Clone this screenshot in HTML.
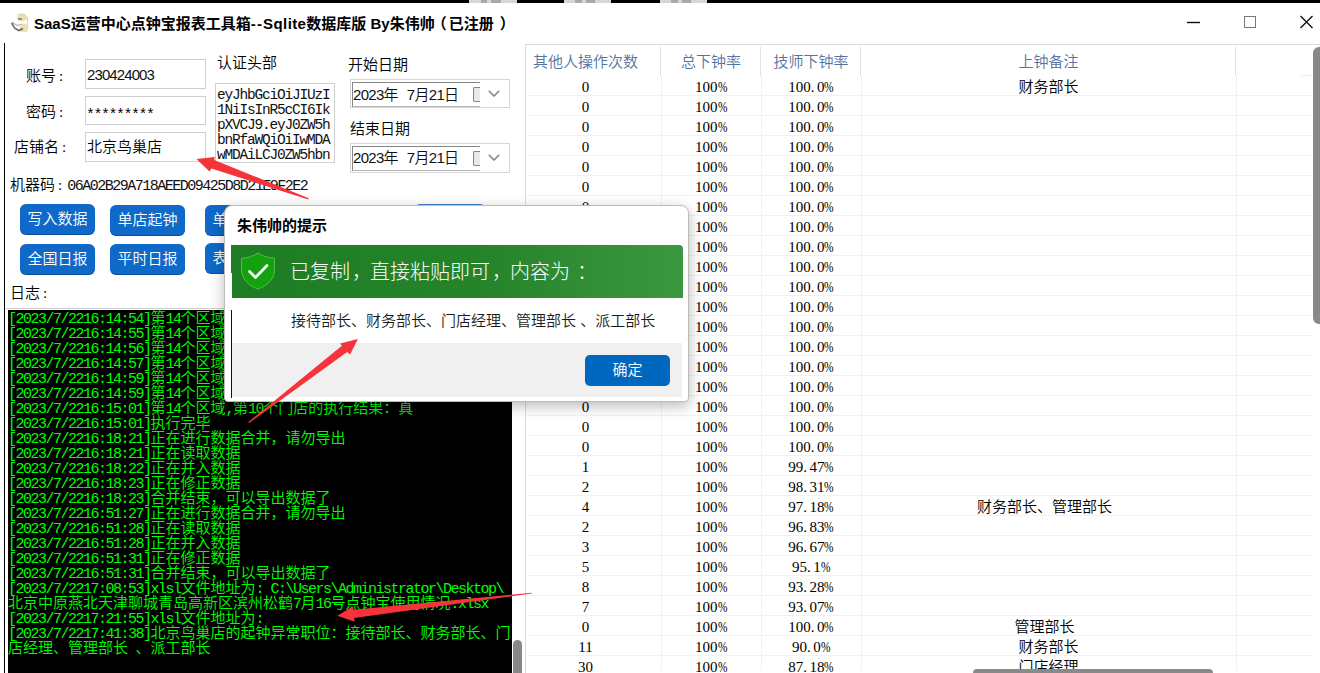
<!DOCTYPE html>
<html lang="zh-CN">
<head>
<meta charset="utf-8">
<title>SaaS运营中心点钟宝报表工具箱</title>
<style>
*{box-sizing:border-box;margin:0;padding:0}
html,body{width:1320px;height:673px;overflow:hidden;background:#fff}
body{position:relative;font-family:"Liberation Serif","Noto Sans CJK SC",serif;font-weight:350;font-size:15px;color:#000}
.abs{position:absolute}
#topstrip{position:absolute;left:0;top:0;width:1320px;height:3px;background:#000}
#topstrip i{position:absolute;top:0;height:2.500px;background:linear-gradient(90deg,#d6d6d6 0 24%,#a9a9a9 24% 38%,#d6d6d6 38% 46%,#a9a9a9 46% 66%,#d6d6d6 66%)}
#title{position:absolute;left:34px;top:13px;height:22px;line-height:22px;font-family:"Liberation Sans","Noto Sans CJK SC",sans-serif;font-weight:bold;font-size:15px;color:#000;white-space:nowrap}
#leftline{position:absolute;left:4px;top:43px;width:1px;height:630px;background:#000}
.lbl{position:absolute;white-space:nowrap;height:18px;line-height:18px;font-size:15px}
.inp{position:absolute;border:1px solid #cfcfcf;background:#fff;white-space:nowrap;font-size:15px;padding-left:1px}
.hw{font-family:"Liberation Mono",monospace;letter-spacing:-1.5px}
.btn{position:absolute;width:75px;height:30px;line-height:29px;border-radius:6px;background:#0f69c8;box-shadow:0 1px 0 #0a4f9c;color:#fff;text-align:center;font-family:"Liberation Sans","Noto Sans CJK SC",sans-serif;font-size:15px;white-space:nowrap;overflow:hidden}
#log{position:absolute;left:8px;top:310px;width:504px;height:363px;padding-top:2px;background:#000;color:#00ff00;overflow:hidden;font-family:"Liberation Mono","Noto Sans CJK SC",monospace;font-size:15px;font-weight:350}
#log .ll{height:15px;line-height:15px;white-space:nowrap}
#log .a{letter-spacing:-1.5px;white-space:pre}
/* table */
#tbl{position:absolute;left:525px;top:44px;width:795px;height:629px}
#tbl:before{content:"";position:absolute;left:0;top:0;width:1.300px;height:629px;background:#dadada}
#tbl:after{content:"";position:absolute;left:0;top:0;width:795px;height:1.300px;background:#dcdcdc}
.th{position:absolute;top:47px;height:30px;line-height:30px;text-align:center;color:#54739f;font-weight:350;font-family:"Liberation Sans","Noto Sans CJK SC",sans-serif;font-size:15px;white-space:nowrap}
.vl{position:absolute;width:1px;background:#f1f1f1}
.vh{position:absolute;width:1px;background:#e2e2e2;top:47px;height:29px}
.tr{position:absolute;left:527px;width:785px;height:20px;border-bottom:1px solid #f1f1f1;font-size:15px;line-height:23px;white-space:nowrap}
.c{position:absolute;top:0;height:20px;text-align:center}
.c1{left:-9px;width:135px}.c2{left:134px;width:100px}.c3{left:234px;width:100px}.c4{left:334px;width:375px}
.dp{position:absolute;left:350px;width:160px;height:29px;border:1px solid #d6d6d6;background:#fff}
.dpi{position:absolute;left:1px;top:2px;width:128px;height:25px;border:1px solid #868686;border-right:none;border-bottom-color:#b4b4b4;line-height:21px;padding-left:0;font-size:15px;white-space:pre;font-family:"Liberation Sans","Noto Sans CJK SC",sans-serif;letter-spacing:-.7px;word-spacing:5.5px;color:#111}
.cal{position:absolute;left:122px;top:7px;width:7px;height:15px;border:1.500px solid #8d8282;border-right:none;border-radius:2px 0 0 2px;background:#e8e8f0}
.chev{position:absolute;left:137px;top:10px}
#dlg{position:absolute;left:224px;top:205px;width:465px;height:197px;background:#fff;border:1px solid #bdbdbd;border-radius:8px 8px 4px 4px;box-shadow:0 4px 14px rgba(0,0,0,.28);font-family:"Liberation Sans","Noto Sans CJK SC",sans-serif;overflow:hidden}
#dlgt{position:absolute;left:12px;top:9px;height:22px;line-height:22px;font-weight:bold;font-size:15px}
#ban{position:absolute;left:7px;top:39px;width:451px;height:53px;background:linear-gradient(90deg,#1e7d24 0%,#25832a 55%,#3c9741 100%);border-radius:0 4px 0 0}
#bant{position:absolute;left:58px;top:12px;height:30px;line-height:30px;font-size:20px;font-weight:300;color:#fff;white-space:nowrap}
#dlgb{position:absolute;left:66px;top:104px;height:22px;line-height:22px;font-size:15px;font-weight:350;white-space:pre;color:#1a1a1a}
#dlgf{position:absolute;left:7px;top:137px;width:450px;height:54px;background:#f0f0f0}
#ok{position:absolute;left:353px;top:12px;width:85px;height:31px;line-height:30px;border-radius:5px;background:#0067c0;color:#fff;text-align:center;font-size:15px;font-weight:350}

#title b{font-weight:bold;letter-spacing:.4px}
#title i{font-style:normal;letter-spacing:1.2px}
#title s{text-decoration:none;margin-left:-3px;margin-right:2px}
#title u{text-decoration:none;margin-left:6px}
.lbl u{text-decoration:none;margin-left:3px}
.c em{font-style:normal;display:inline-block;width:9.500px;transform:scaleX(.76);transform-origin:0 50%;letter-spacing:0}
.c b{font-weight:inherit;letter-spacing:2.500px}
#bant i{font-style:normal;position:relative;left:2px}

</style>
</head>
<body>
<div id="topstrip"><i style="left:469px;width:48px"></i><i style="left:564px;width:47px"></i><i style="left:660px;width:47px"></i></div>
<svg class="abs" style="left:9px;top:12px" width="22" height="22" viewBox="0 0 22 22"><ellipse cx="13" cy="5.5" rx="5" ry="4" fill="#ead9a6" opacity=".85"/><ellipse cx="15" cy="16" rx="4.5" ry="4.5" fill="#ecd7a0" opacity=".8"/><path d="M8 3C12 1 18 3 19 8" stroke="#d9c9a0" stroke-width="1" fill="none" opacity=".7"/><path d="M2.500 11L6 16.500L10 18.500L14 16.500" stroke="#3a3a3a" stroke-width="1.600" fill="none" opacity=".75"/><path d="M3 10L8 13.500L13 12" stroke="#9a9a9a" stroke-width="1.200" fill="none" opacity=".7"/><path d="M9 7H13" stroke="#444" stroke-width="1.400" opacity=".7"/><path d="M18.500 6V14" stroke="#bbb" stroke-width=".8" opacity=".8"/></svg>
<div id="title">SaaS运营中心点钟宝报表工具箱<i>--</i><b>Sqlite</b>数据库版 By朱伟帅<s>（</s>已注册<u>）</u></div>
<svg class="abs" style="left:1180px;top:10px" width="140" height="26" viewBox="0 0 140 26"><path d="M7 12.5H20" stroke="#111" stroke-width="1.4" fill="none"/><rect x="64.500" y="6.500" width="11" height="11" stroke="#777" stroke-width="1" fill="none"/><path d="M120.5 6L132.5 18M132.5 6L120.5 18" stroke="#111" stroke-width="1.4" fill="none"/></svg>
<div id="leftline"></div>

<div class="lbl" style="left:26px;top:67px">账号<u>:</u></div>
<div class="lbl" style="left:26px;top:103px">密码<u>:</u></div>
<div class="lbl" style="left:14px;top:138px">店铺名<u>:</u></div>
<div class="inp" style="left:85px;top:59px;width:121px;height:30px;line-height:29px;padding-left:1px;font-family:'Liberation Sans',sans-serif;letter-spacing:-.9px;color:#111"><span>230424003</span></div>
<div class="inp" style="left:85px;top:96px;width:121px;height:29px;line-height:35px;padding-left:0"><span class="hw">*********</span></div>
<div class="inp" style="left:85px;top:132px;width:121px;height:30px;line-height:29px">北京鸟巢店</div>

<div class="lbl" style="left:217px;top:54px">认证头部</div>
<div class="inp hw" style="left:215px;top:83px;width:120px;height:80px;padding:4px 0 0 1px;line-height:15px;font-size:14.5px;letter-spacing:-1.2px;color:#111"><span>eyJhbGciOiJIUzI<br>1NiIsInR5cCI6Ik<br>pXVCJ9.eyJ0ZW5h<br>bnRfaWQiOiIwMDA<br>wMDAiLCJ0ZW5hbn</span></div>

<div class="lbl" style="left:348px;top:56px">开始日期</div>
<div class="lbl" style="left:350px;top:120px">结束日期</div>
<div class="dp" style="top:79px"><div class="dpi" style="line-height:23px">2023年 7月21日</div><i class="cal"></i><svg class="chev" width="12" height="7" viewBox="0 0 12 7"><path d="M.8.8L6 6L11.2.8" stroke="#858585" stroke-width="1.600" fill="none"/></svg></div>
<div class="dp" style="top:143px;height:30px"><div class="dpi">2023年 7月21日</div><i class="cal"></i><svg class="chev" width="12" height="7" viewBox="0 0 12 7"><path d="M.8.8L6 6L11.2.8" stroke="#858585" stroke-width="1.600" fill="none"/></svg></div>

<div class="lbl" style="left:10px;top:176px">机器码<u>:</u><span class="hw" style="margin-left:5px;color:#111">06A02B29A718AEED09425D8D21E9F2E2</span></div>

<div class="btn" style="left:20px;top:204px">写入数据</div>
<div class="btn" style="left:110px;top:205px">单店起钟</div>
<div class="btn" style="left:205px;top:205px">单店下钟</div>
<div class="btn" style="left:414px;top:204px;width:72px;background:#3d7fca">导出数据</div>
<div class="btn" style="left:20px;top:244px">全国日报</div>
<div class="btn" style="left:110px;top:244px">平时日报</div>
<div class="btn" style="left:205px;top:243px">表格合并</div>
<div class="lbl" style="left:10px;top:284px">日志<u>:</u></div>

<div class="abs" style="left:6px;top:308px;width:516px;height:1px;background:#cdcdcd"></div>
<div id="log">
<div class="ll"><span class="a">[2023/7/2216:14:54]</span>第<span class="a">14</span>个区域<span class="a">,</span>第<span class="a">4</span>个门店的执行结果：真</div>
<div class="ll"><span class="a">[2023/7/2216:14:55]</span>第<span class="a">14</span>个区域<span class="a">,</span>第<span class="a">5</span>个门店的执行结果：真</div>
<div class="ll"><span class="a">[2023/7/2216:14:56]</span>第<span class="a">14</span>个区域<span class="a">,</span>第<span class="a">6</span>个门店的执行结果：真</div>
<div class="ll"><span class="a">[2023/7/2216:14:57]</span>第<span class="a">14</span>个区域<span class="a">,</span>第<span class="a">7</span>个门店的执行结果：真</div>
<div class="ll"><span class="a">[2023/7/2216:14:59]</span>第<span class="a">14</span>个区域<span class="a">,</span>第<span class="a">8</span>个门店的执行结果：真</div>
<div class="ll"><span class="a">[2023/7/2216:14:59]</span>第<span class="a">14</span>个区域<span class="a">,</span>第<span class="a">9</span>个门店的执行结果：真</div>
<div class="ll"><span class="a">[2023/7/2216:15:01]</span>第<span class="a">14</span>个区域<span class="a">,</span>第<span class="a">10</span>个门店的执行结果：真</div>
<div class="ll"><span class="a">[2023/7/2216:15:01]</span>执行完毕</div>
<div class="ll"><span class="a">[2023/7/2216:18:21]</span>正在进行数据合并，请勿导出</div>
<div class="ll"><span class="a">[2023/7/2216:18:21]</span>正在读取数据</div>
<div class="ll"><span class="a">[2023/7/2216:18:22]</span>正在并入数据</div>
<div class="ll"><span class="a">[2023/7/2216:18:23]</span>正在修正数据</div>
<div class="ll"><span class="a">[2023/7/2216:18:23]</span>合并结束，可以导出数据了</div>
<div class="ll"><span class="a">[2023/7/2216:51:27]</span>正在进行数据合并，请勿导出</div>
<div class="ll"><span class="a">[2023/7/2216:51:28]</span>正在读取数据</div>
<div class="ll"><span class="a">[2023/7/2216:51:28]</span>正在并入数据</div>
<div class="ll"><span class="a">[2023/7/2216:51:31]</span>正在修正数据</div>
<div class="ll"><span class="a">[2023/7/2216:51:31]</span>合并结束，可以导出数据了</div>
<div class="ll"><span class="a">[2023/7/2217:08:53]xlsl</span>文件地址为<span class="a">: C:\Users\Administrator\Desktop\</span></div>
<div class="ll">北京中原燕北天津聊城青岛高新区滨州松鹤<span class="a">7</span>月<span class="a">16</span>号点钟宝使用情况<span class="a">.xlsx</span></div>
<div class="ll"><span class="a">[2023/7/2217:21:55]xlsl</span>文件地址为<span class="a">:</span></div>
<div class="ll"><span class="a">[2023/7/2217:41:38]</span>北京鸟巢店的起钟异常职位：接待部长、财务部长、门</div>
<div class="ll">店经理、管理部长<span class="a"> </span>、派工部长</div>
</div>
<div class="abs" style="left:513px;top:640px;width:9px;height:40px;border-radius:4.5px;background:#888"></div>

<div id="tbl"></div>
<div class="th" style="left:518px;width:135px">其他人操作次数</div>
<div class="th" style="left:661px;width:100px">总下钟率</div>
<div class="th" style="left:761px;width:100px">技师下钟率</div>
<div class="th" style="left:861px;width:375px">上钟备注</div>
<i class="vh" style="left:660px"></i><i class="vh" style="left:760px"></i><i class="vh" style="left:860px"></i><i class="vh" style="left:1235px"></i>
<i class="vl" style="left:661px;top:76px;height:594px"></i><i class="vl" style="left:761px;top:76px;height:594px"></i><i class="vl" style="left:861px;top:76px;height:594px"></i><i class="vl" style="left:1236px;top:76px;height:594px"></i>
<div class="tr" style="top:76px"><span class="c c1">0</span><span class="c c2">100<em>%</em></span><span class="c c3">100<b>.</b>0<em>%</em></span><span class="c c4">财务部长</span></div>
<div class="tr" style="top:96px"><span class="c c1">0</span><span class="c c2">100<em>%</em></span><span class="c c3">100<b>.</b>0<em>%</em></span><span class="c c4"></span></div>
<div class="tr" style="top:116px"><span class="c c1">0</span><span class="c c2">100<em>%</em></span><span class="c c3">100<b>.</b>0<em>%</em></span><span class="c c4"></span></div>
<div class="tr" style="top:136px"><span class="c c1">0</span><span class="c c2">100<em>%</em></span><span class="c c3">100<b>.</b>0<em>%</em></span><span class="c c4"></span></div>
<div class="tr" style="top:156px"><span class="c c1">0</span><span class="c c2">100<em>%</em></span><span class="c c3">100<b>.</b>0<em>%</em></span><span class="c c4"></span></div>
<div class="tr" style="top:176px"><span class="c c1">0</span><span class="c c2">100<em>%</em></span><span class="c c3">100<b>.</b>0<em>%</em></span><span class="c c4"></span></div>
<div class="tr" style="top:196px"><span class="c c1">0</span><span class="c c2">100<em>%</em></span><span class="c c3">100<b>.</b>0<em>%</em></span><span class="c c4"></span></div>
<div class="tr" style="top:216px"><span class="c c1">0</span><span class="c c2">100<em>%</em></span><span class="c c3">100<b>.</b>0<em>%</em></span><span class="c c4"></span></div>
<div class="tr" style="top:236px"><span class="c c1">0</span><span class="c c2">100<em>%</em></span><span class="c c3">100<b>.</b>0<em>%</em></span><span class="c c4"></span></div>
<div class="tr" style="top:256px"><span class="c c1">0</span><span class="c c2">100<em>%</em></span><span class="c c3">100<b>.</b>0<em>%</em></span><span class="c c4"></span></div>
<div class="tr" style="top:276px"><span class="c c1">0</span><span class="c c2">100<em>%</em></span><span class="c c3">100<b>.</b>0<em>%</em></span><span class="c c4"></span></div>
<div class="tr" style="top:296px"><span class="c c1">0</span><span class="c c2">100<em>%</em></span><span class="c c3">100<b>.</b>0<em>%</em></span><span class="c c4"></span></div>
<div class="tr" style="top:316px"><span class="c c1">0</span><span class="c c2">100<em>%</em></span><span class="c c3">100<b>.</b>0<em>%</em></span><span class="c c4"></span></div>
<div class="tr" style="top:336px"><span class="c c1">0</span><span class="c c2">100<em>%</em></span><span class="c c3">100<b>.</b>0<em>%</em></span><span class="c c4"></span></div>
<div class="tr" style="top:356px"><span class="c c1">0</span><span class="c c2">100<em>%</em></span><span class="c c3">100<b>.</b>0<em>%</em></span><span class="c c4"></span></div>
<div class="tr" style="top:376px"><span class="c c1">0</span><span class="c c2">100<em>%</em></span><span class="c c3">100<b>.</b>0<em>%</em></span><span class="c c4"></span></div>
<div class="tr" style="top:396px"><span class="c c1">0</span><span class="c c2">100<em>%</em></span><span class="c c3">100<b>.</b>0<em>%</em></span><span class="c c4"></span></div>
<div class="tr" style="top:416px"><span class="c c1">0</span><span class="c c2">100<em>%</em></span><span class="c c3">100<b>.</b>0<em>%</em></span><span class="c c4"></span></div>
<div class="tr" style="top:436px"><span class="c c1">0</span><span class="c c2">100<em>%</em></span><span class="c c3">100<b>.</b>0<em>%</em></span><span class="c c4"></span></div>
<div class="tr" style="top:456px"><span class="c c1">1</span><span class="c c2">100<em>%</em></span><span class="c c3">99<b>.</b>47<em>%</em></span><span class="c c4"></span></div>
<div class="tr" style="top:476px"><span class="c c1">2</span><span class="c c2">100<em>%</em></span><span class="c c3">98<b>.</b>31<em>%</em></span><span class="c c4"></span></div>
<div class="tr" style="top:496px"><span class="c c1">4</span><span class="c c2">100<em>%</em></span><span class="c c3">97<b>.</b>18<em>%</em></span><span class="c c4" style="left:330px">财务部长、管理部长</span></div>
<div class="tr" style="top:516px"><span class="c c1">2</span><span class="c c2">100<em>%</em></span><span class="c c3">96<b>.</b>83<em>%</em></span><span class="c c4"></span></div>
<div class="tr" style="top:536px"><span class="c c1">3</span><span class="c c2">100<em>%</em></span><span class="c c3">96<b>.</b>67<em>%</em></span><span class="c c4"></span></div>
<div class="tr" style="top:556px"><span class="c c1">5</span><span class="c c2">100<em>%</em></span><span class="c c3">95<b>.</b>1<em>%</em></span><span class="c c4"></span></div>
<div class="tr" style="top:576px"><span class="c c1">8</span><span class="c c2">100<em>%</em></span><span class="c c3">93<b>.</b>28<em>%</em></span><span class="c c4"></span></div>
<div class="tr" style="top:596px"><span class="c c1">7</span><span class="c c2">100<em>%</em></span><span class="c c3">93<b>.</b>07<em>%</em></span><span class="c c4"></span></div>
<div class="tr" style="top:616px"><span class="c c1">0</span><span class="c c2">100<em>%</em></span><span class="c c3">100<b>.</b>0<em>%</em></span><span class="c c4" style="left:330px">管理部长</span></div>
<div class="tr" style="top:636px"><span class="c c1">11</span><span class="c c2">100<em>%</em></span><span class="c c3">90<b>.</b>0<em>%</em></span><span class="c c4">财务部长</span></div>
<div class="tr" style="top:656px"><span class="c c1">30</span><span class="c c2">100<em>%</em></span><span class="c c3">87<b>.</b>18<em>%</em></span><span class="c c4">门店经理</span></div>
<div class="abs" style="left:1313px;top:47px;width:8px;height:277px;border-radius:6px 0 0 6px;background:#888"></div>
<div class="abs" style="left:1301px;top:75px;width:11px;height:1px;background:#ececec"></div>
<div class="abs" style="left:973px;top:669px;width:240px;height:8px;border-radius:4px;background:#8a8a8a"></div>

<!-- dialog -->
<div id="dlg">
 <div id="dlgt">朱伟帅的提示</div>
 <div id="ban"><svg class="abs" style="left:8px;top:7px" width="36" height="38" viewBox="0 0 36 38"><path d="M18 1C13 4.5 7 6 1.5 6.2V18c0 9 7 15.5 16.5 19 9.500-3.500 16.500-10 16.500-19V6.200C29 6 23 4.500 18 1Z" fill="#13a10e" stroke="#4fbf4c" stroke-width="1"/><path d="M9.5 19.500L15.500 25.500L27 13.500" stroke="#fff" stroke-width="2.700" fill="none" stroke-linecap="round" stroke-linejoin="round"/></svg><span id="bant">已复制<i>，</i>直接粘贴即可<i>，</i>内容为<i style="left:7px">：</i></span></div>
 <div id="dlgb">接待部长、财务部长、门店经理、管理部长 、派工部长</div>
 <div id="dlgf"><div id="ok">确定</div></div>
 <i class="abs" style="left:6px;top:104px;width:1px;height:88px;background:#111"></i>
 <i class="abs" style="left:6px;top:39px;width:1px;height:28px;background:#1f5fd0"></i>
</div>

<svg class="abs" style="left:0;top:0;pointer-events:none" width="1320" height="673" viewBox="0 0 1320 673">
<g fill="#f5333a">
<path d="M196.500 159.100L214.900 156.900L214.200 160L308.700 198.200L308.300 199.400L211.400 168.600L209.500 171.600Z"/>
<path d="M357.900 339.100L340.100 343.400L341.900 345.700L248.300 422.100L249.100 423.100L347.100 352.100L350.100 354.500Z"/>
<path d="M337.400 615.800L352.900 606.200L353.500 609.700L531.760 592.800L531.840 593.400L354.100 618.100L354.700 621.700Z"/>
</g>
</svg>

</body>
</html>
